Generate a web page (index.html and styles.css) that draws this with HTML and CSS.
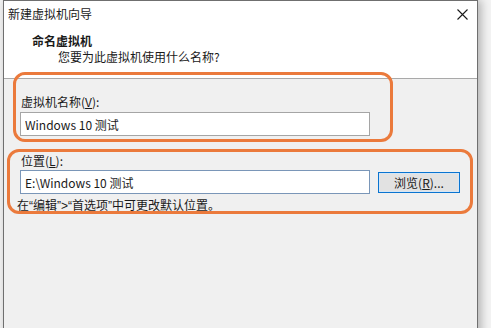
FILE: index.html
```html
<!DOCTYPE html>
<html lang="zh-CN">
<head>
    <meta charset="UTF-8">
    <meta name="viewport" content="width=device-width, initial-scale=1.0">
    <title>新建虚拟机向导</title>
    <link rel="stylesheet" href="styles.css">
</head>
<body>
    <div class="window">
        <div class="titlebar">
            <span class="title">新建虚拟机向导</span>
            <svg class="close" width="11" height="11" viewBox="0 0 11 11">
                <path d="M0.5 0.5 L10.5 10.5 M10.5 0.5 L0.5 10.5" stroke="#1a1a1a" stroke-width="1.1" fill="none"/>
            </svg>
        </div>
        <div class="header">
            <div class="header-title">命名虚拟机</div>
            <div class="header-sub">您要为此虚拟机使用什么名称?</div>
        </div>
        <div class="content">
            <label class="field-label" for="vmName">虚拟机名称(<u>V</u>):</label>
            <input type="text" id="vmName" class="text-input" value="Windows 10 测试">

            <label class="field-label second" for="vmPath">位置(<u>L</u>):</label>
            <div class="path-row">
                <input type="text" id="vmPath" class="text-input path-input" value="E:\Windows 10 测试">
                <button class="browse-btn">浏览(<u>R</u>)...</button>
            </div>
            <p class="hint">在“编辑”&gt;“首选项”中可更改默认位置。</p>
        </div>

        <!-- annotation rings -->
        <div class="mark mark-name"></div>
        <div class="mark mark-path"></div>
    </div>
</body>
</html>
```

FILE: styles.css
```css
body {
    margin: 0;
    background-color: #f3f3f3;
    font-family: "Noto Sans CJK SC", "Microsoft YaHei", sans-serif;
    font-size: 12px;
    color: #1a1a1a;
    overflow: hidden;
}
.window {
    position: relative;
    width: 475px;
    height: 340px;
    margin-left: 3px;
    box-sizing: border-box;
    border: 1px solid #6f6f6f;
    border-bottom: none;
    background-color: #f0f0f0;
    box-shadow: 3px 0 9px rgba(0, 0, 0, 0.28);
}
.titlebar {
    display: flex;
    justify-content: space-between;
    align-items: center;
    height: 28px;
    padding: 0 9px 0 4px;
    background-color: #ffffff;
    line-height: 16px;
}
.title {
    margin-top: -3px;
}
.close {
    margin-top: -2px;
}
.header {
    height: 49px;
    background-color: #ffffff;
    border-bottom: 1px solid #a9a9a9;
    line-height: 16px;
}
.header-title {
    padding: 4px 0 0 28px;
    font-weight: bold;
}
.header-sub {
    padding: 0 0 0 54px;
}
.content {
    padding: 15px 0 0 16px;
    line-height: 16px;
}
.field-label {
    display: block;
    margin-left: 1px;
    height: 16px;
}
.field-label.second {
    margin-top: 17px;
}
.text-input {
    display: block;
    width: 350px;
    height: 24px;
    margin-top: 2px;
    padding: 0 4px;
    box-sizing: border-box;
    border: 1px solid #a5a5a5;
    background-color: #ffffff;
    font-family: inherit;
    font-size: 12px;
    color: #1a1a1a;
    outline: none;
}
.path-row {
    display: flex;
    align-items: center;
    gap: 8px;
    margin-top: 1px;
}
.path-input {
    margin-top: 0;
    border-color: #7a96b8;
}
.browse-btn {
    width: 82px;
    height: 21px;
    padding: 0;
    border: 1px solid #0a74d0;
    background-color: #e2e2e2;
    font-family: inherit;
    font-size: 12px;
    color: #1a1a1a;
    box-shadow: inset 0 0 0 1px #d6e6f5;
}
.hint {
    margin: 4px 0 0 -3px;
    font-family: "Liberation Sans", "Noto Sans CJK SC", sans-serif;
}
.mark {
    position: absolute;
    box-sizing: border-box;
    border: 3px solid #eb7a3c;
    border-radius: 12px;
}
.mark-name {
    left: 9px;
    top: 71px;
    width: 380px;
    height: 70px;
}
.mark-path {
    left: 3px;
    top: 148px;
    width: 466px;
    height: 65px;
}
```
